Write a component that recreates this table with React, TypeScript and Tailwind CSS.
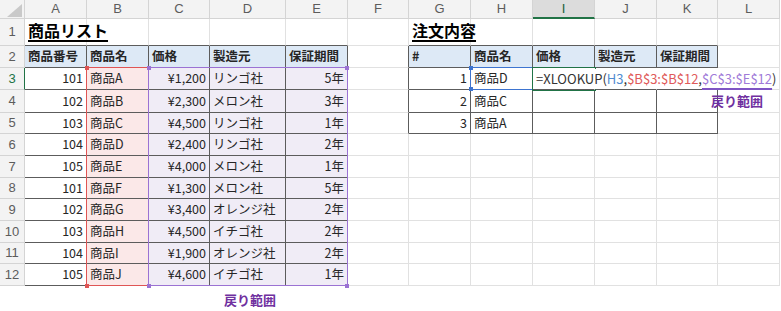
import React from 'react';

const LETTERS = ['A', 'B', 'C', 'D', 'E', 'F', 'G', 'H', 'I', 'J', 'K', 'L'];
const ROW_COUNT = 12;

const JP = "font-['Noto_Sans_CJK_JP','Noto_Sans',sans-serif]";

type Cell = { text: string; align?: 'left' | 'right'; bold?: boolean; title?: boolean };

const products: [string, string, string, string, string][] = [
  ['101', '商品A', '¥1,200', 'リンゴ社', '5年'],
  ['102', '商品B', '¥2,300', 'メロン社', '3年'],
  ['103', '商品C', '¥4,500', 'リンゴ社', '1年'],
  ['104', '商品D', '¥2,400', 'リンゴ社', '2年'],
  ['105', '商品E', '¥4,000', 'メロン社', '1年'],
  ['101', '商品F', '¥1,300', 'メロン社', '5年'],
  ['102', '商品G', '¥3,400', 'オレンジ社', '2年'],
  ['103', '商品H', '¥4,500', 'イチゴ社', '2年'],
  ['104', '商品I', '¥1,900', 'オレンジ社', '2年'],
  ['105', '商品J', '¥4,600', 'イチゴ社', '1年'],
];

const orders: [string, string][] = [
  ['1', '商品D'],
  ['2', '商品C'],
  ['3', '商品A'],
];

// sheet contents keyed by "row-col" (col 0 = A)
const cells: Record<string, Cell> = {};
cells['1-0'] = { text: '商品リスト', title: true };
cells['1-6'] = { text: '注文内容', title: true };
['商品番号', '商品名', '価格', '製造元', '保証期間'].forEach((t, i) => {
  cells[`2-${i}`] = { text: t, bold: true };
});
['#', '商品名', '価格', '製造元', '保証期間'].forEach((t, i) => {
  cells[`2-${i + 6}`] = { text: t, bold: true };
});
products.forEach((p, i) => {
  const r = i + 3;
  cells[`${r}-0`] = { text: p[0], align: 'right' };
  cells[`${r}-1`] = { text: p[1] };
  cells[`${r}-2`] = { text: p[2], align: 'right' };
  cells[`${r}-3`] = { text: p[3] };
  cells[`${r}-4`] = { text: p[4], align: 'right' };
});
orders.forEach((o, i) => {
  const r = i + 3;
  cells[`${r}-6`] = { text: o[0], align: 'right' };
  cells[`${r}-7`] = { text: o[1] };
});

const inTable = (r: number, c: number) =>
  (r >= 2 && r <= 12 && c >= 0 && c <= 4) || (r >= 2 && r <= 5 && c >= 6 && c <= 10);

function fillFor(r: number, c: number) {
  if (r === 2 && inTable(r, c)) return 'bg-[#dde9f6]';
  if (r >= 3 && r <= 12 && c === 1) return 'bg-[#fbe8e8]';
  if (r >= 3 && r <= 12 && c >= 2 && c <= 4) return 'bg-[#f0ecf6]';
  return 'bg-white';
}

function Formula() {
  return (
    <span className={`${JP} text-[13px] whitespace-nowrap text-[#333]`}>
      =XLOOKUP(
      <span className="text-[#4f8bd0]">H3</span>,
      <span className="text-[#e05a5a]">$B$3:$B$12</span>,
      <span className="text-[#a07ad8] underline decoration-[#7f55c4] decoration-2 underline-offset-[4px]">
        $C$3:$E$12
      </span>
      )
    </span>
  );
}

function SheetCell({ r, c }: { r: number; c: number }) {
  const cell = cells[`${r}-${c}`];
  const rightDark = inTable(r, c) || inTable(r, c + 1);
  const bottomDark = inTable(r, c) || inTable(r + 1, c);
  // text from I3 spills over J3:K3, so their side borders are not drawn
  const hideRight = r === 3 && (c === 8 || c === 9 || c === 10);

  const right = hideRight
    ? 'border-r-transparent'
    : rightDark
      ? 'border-r-[#5c5c5c]'
      : 'border-r-[#e1e1e1]';
  const bottom = bottomDark ? 'border-b-[#5c5c5c]' : 'border-b-[#e1e1e1]';

  if (r === 3 && c === 8) {
    return (
      <div className={`relative z-10 flex items-center border-r border-b ${right} ${bottom} bg-white pl-[3px] overflow-visible`}>
        <Formula />
      </div>
    );
  }

  return (
    <div
      className={`flex border-r border-b ${right} ${bottom} ${fillFor(r, c)} ${
        cell?.title ? 'relative z-10 items-end pb-[3px]' : 'items-center'
      } ${cell?.align === 'right' ? 'justify-end pr-[3px]' : 'pl-[3px]'} overflow-visible`}
    >
      {cell && (
        <span
          className={`${JP} whitespace-nowrap ${
            cell.title
              ? 'text-[16px] font-bold underline decoration-[1.5px] underline-offset-[3px] text-black'
              : 'text-[12.5px] text-[#262626]'
          } ${cell.bold ? 'font-bold' : ''}`}
        >
          {cell.text}
        </span>
      )}
    </div>
  );
}

function Corner({ x, y, color }: { x: number; y: number; color: string }) {
  return (
    <div
      className={`absolute w-[4px] h-[4px] ${color}`}
      style={{ left: x - 1, top: y - 1 }}
    />
  );
}

export default function App() {
  const rows = Array.from({ length: ROW_COUNT }, (_, i) => i + 1);

  return (
    <div className="relative w-[781px] h-[311px] bg-white overflow-hidden">
      <div className="grid grid-cols-[25px_62px_62px_61px_76px_62px_61px_62px_62px_62px_62px_61px_62px] grid-rows-[19px_27px_22px_22px_23px_21px_22px_22px_21px_22px_22px_21px_22px]">
        {/* select-all corner */}
        <div className="relative bg-[#f3f3f3] border-r border-b border-r-[#d4d4d4] border-b-[#d4d4d4]">
          <svg className="absolute left-[7px] top-[4px]" width="16" height="13" viewBox="0 0 16 13">
            <polygon points="15,0 15,13 0,13" fill="#c9c9c9" />
          </svg>
        </div>
        {LETTERS.map((l, i) => (
          <div
            key={l}
            className={`flex items-center justify-center border-r border-b border-r-[#d4d4d4] ${
              i === 8
                ? 'bg-[#dcdcdc] border-b-2 border-b-[#217346] text-[#1b5e38]'
                : 'bg-[#f3f3f3] border-b-[#d4d4d4] text-[#5c5c5c]'
            } font-['Liberation_Sans',sans-serif] text-[13px]`}
          >
            {l}
          </div>
        ))}
        {rows.map((r) => (
          <React.Fragment key={r}>
            <div
              className={`flex items-center justify-center bg-[#f3f3f3] border-b border-b-[#d4d4d4] border-r ${
                r === 3 ? 'border-r-[#217346] text-[#217346]' : 'border-r-[#d4d4d4] text-[#5c5c5c]'
              } font-['Liberation_Sans',sans-serif] text-[13px]`}
            >
              {r}
            </div>
            {LETTERS.map((_, c) => (
              <SheetCell key={c} r={r} c={c} />
            ))}
          </React.Fragment>
        ))}
      </div>

      {/* label below the return range */}
      <div className="pl-[224px] pt-[1px]">
        <span className={`${JP} text-[13px] font-bold text-[#7030a0]`}>戻り範囲</span>
      </div>

      {/* reference highlights drawn over the sheet */}
      <div className="absolute left-[86px] top-[67px] w-[63px] h-[219px] border border-[#df5555] pointer-events-none" />
      <Corner x={86} y={67} color="bg-[#df5555]" />
      <Corner x={86} y={285} color="bg-[#df5555]" />
      <div className="absolute left-[148px] top-[67px] w-[200px] h-[219px] border border-[#9b72d3] pointer-events-none" />
      <Corner x={148} y={67} color="bg-[#9b72d3]" />
      <Corner x={148} y={285} color="bg-[#9b72d3]" />
      <Corner x={346} y={67} color="bg-[#9b72d3]" />
      <Corner x={346} y={285} color="bg-[#9b72d3]" />
      <div className="absolute left-[470px] top-[67px] w-[63px] h-[23px] border border-[#3d74d0] pointer-events-none" />
      <Corner x={470} y={67} color="bg-[#3d74d0]" />
      <Corner x={470} y={88} color="bg-[#3d74d0]" />
      <div className="absolute left-[532px] top-[67px] w-[64px] h-[24px] border-2 border-r-0 border-[#217346] pointer-events-none" />

      <span className={`absolute left-[711px] top-[91px] ${JP} text-[13px] font-bold text-[#7030a0]`}>
        戻り範囲
      </span>
    </div>
  );
}
